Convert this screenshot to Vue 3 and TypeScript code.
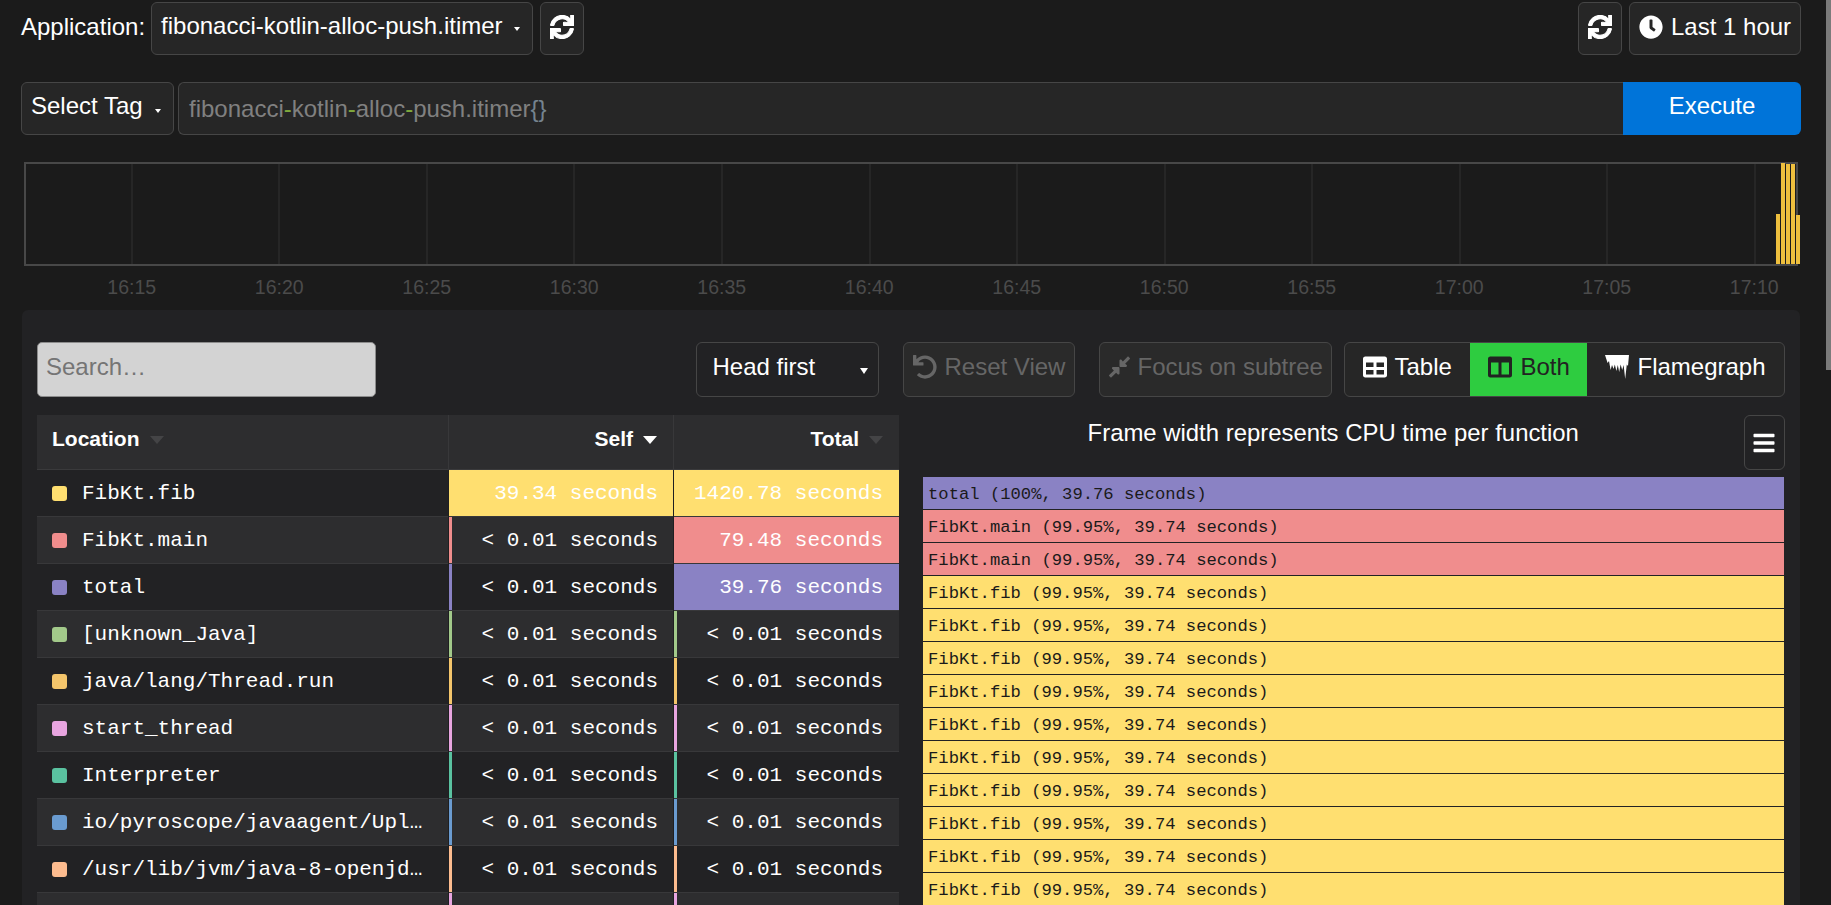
<script setup lang="ts">
interface Row { name: string; color: string; self: string; total: string; selfFull?: boolean; totalFull?: boolean }

const syncPath = 'M440.65 12.57l4 82.77A247.16 247.16 0 0 0 255.83 8C134.73 8 33.91 94.92 12.29 209.82A12 12 0 0 0 24.09 224h49.05a12 12 0 0 0 11.67-9.26 175.91 175.91 0 0 1 317-56.94l-101.46-4.86a12 12 0 0 0-12.57 12v47.41a12 12 0 0 0 12 12H500a12 12 0 0 0 12-12V12a12 12 0 0 0-12-12h-47.37a12 12 0 0 0-11.98 12.57zM255.83 432a175.61 175.61 0 0 1-146-77.8l101.8 4.87a12 12 0 0 0 12.57-12v-47.4a12 12 0 0 0-12-12H12a12 12 0 0 0-12 12V500a12 12 0 0 0 12 12h47.35a12 12 0 0 0 12-12.6l-4.15-82.57A247.17 247.17 0 0 0 255.83 504c121.11 0 221.93-86.92 243.55-201.82a12 12 0 0 0-11.8-14.18h-49.05a12 12 0 0 0-11.67 9.26A175.86 175.86 0 0 1 255.83 432z'

const ticks = ['16:15','16:20','16:25','16:30','16:35','16:40','16:45','16:50','16:55','17:00','17:05','17:10']

const bars = [
  { left: 1750, height: 50 },
  { left: 1755, height: 101 },
  { left: 1760, height: 100 },
  { left: 1765, height: 100 },
  { left: 1770, height: 49 },
]

const tiny = '< 0.01 seconds'
const rows: Row[] = [
  { name: 'FibKt.fib', color: '#ffdf70', self: '39.34 seconds', total: '1420.78 seconds', selfFull: true, totalFull: true },
  { name: 'FibKt.main', color: '#f08d8d', self: tiny, total: '79.48 seconds', totalFull: true },
  { name: 'total', color: '#8a82c4', self: tiny, total: '39.76 seconds', totalFull: true },
  { name: '[unknown_Java]', color: '#a2c98a', self: tiny, total: tiny },
  { name: 'java/lang/Thread.run', color: '#f4c56b', self: tiny, total: tiny },
  { name: 'start_thread', color: '#e8a5e0', self: tiny, total: tiny },
  { name: 'Interpreter', color: '#5ac2a0', self: tiny, total: tiny },
  { name: 'io/pyroscope/javaagent/Upl…', color: '#6a9bd0', self: tiny, total: tiny },
  { name: '/usr/lib/jvm/java-8-openjd…', color: '#fdbc8f', self: tiny, total: tiny },
  { name: '', color: '#e8a5e0', self: '', total: '' },
]

function cellBg(color: string, full?: boolean) {
  return { background: `linear-gradient(${color}, ${color}) left top / ${full ? '100%' : '3px'} 100% no-repeat` }
}

const frames = [
  { text: 'total (100%, 39.76 seconds)', color: '#8a82c4' },
  { text: 'FibKt.main (99.95%, 39.74 seconds)', color: '#f08d8d' },
  { text: 'FibKt.main (99.95%, 39.74 seconds)', color: '#f08d8d' },
  ...Array.from({ length: 10 }, () => ({ text: 'FibKt.fib (99.95%, 39.74 seconds)', color: '#ffdf70' })),
]
</script>

<template>
  <div class="page">
    <header class="bar">
      <span class="label">Application:</span>
      <div class="control app-select">fibonacci-kotlin-alloc-push.itimer<i class="caret small"></i></div>
      <button class="control icon-btn"><svg class="ico sync" viewBox="0 0 512 512"><path :d="syncPath" /></svg></button>
      <button class="control icon-btn push"><svg class="ico sync" viewBox="0 0 512 512"><path :d="syncPath" /></svg></button>
      <button class="control last">
        <svg class="ico" viewBox="0 0 512 512"><path d="M256,8C119,8,8,119,8,256S119,504,256,504,504,393,504,256,393,8,256,8Zm92.49,313h0l-20,25a16,16,0,0,1-22.49,2.5h0l-67-49.72a40,40,0,0,1-15-31.23V112a16,16,0,0,1,16-16h32a16,16,0,0,1,16,16V256l58,42.5A16,16,0,0,1,348.49,321Z" /></svg>
        Last 1 hour
      </button>
    </header>

    <section class="query">
      <div class="control tag"><span class="tag-text">Select Tag</span><i class="caret small"></i></div>
      <div class="query-input">fibonacci<b class="op">-</b>kotlin<b class="op">-</b>alloc<b class="op">-</b>push.itimer<span class="brace">{}</span></div>
      <button class="execute">Execute</button>
    </section>

    <section class="chart">
      <div class="grid"><span v-for="t in ticks" :key="t" class="gridcell"></span></div>
      <span v-for="b in bars" :key="b.left" class="tsbar" :style="{ left: b.left + 'px', height: b.height + 'px' }"></span>
    </section>
    <div class="ticks"><span v-for="t in ticks" :key="t">{{ t }}</span></div>

    <main class="panel">
      <div class="toolbar">
        <input class="search" placeholder="Search…" />
        <div class="control head-first">Head first<i class="caret"></i></div>
        <button class="control dim reset">
          <svg class="ico" viewBox="0 0 512 512"><path d="M212.333 224.333H12c-6.627 0-12-5.373-12-12V12C0 5.373 5.373 0 12 0h48c6.627 0 12 5.373 12 12v78.112C117.773 39.279 184.26 7.47 258.175 8.007c136.906.994 246.448 111.623 246.157 248.532C504.041 393.258 393.12 504 256.333 504c-64.089 0-122.496-24.313-166.51-64.215-5.099-4.622-5.334-12.554-.467-17.42l33.967-33.967c4.474-4.474 11.662-4.717 16.401-.525C170.76 415.336 211.58 432 256.333 432c97.268 0 176-78.716 176-176 0-97.267-78.716-176-176-176-58.496 0-110.28 28.476-142.274 72.333h98.274c6.627 0 12 5.373 12 12v48c0 6.627-5.373 12-12 12z" /></svg>
          Reset View
        </button>
        <button class="control dim focus">
          <svg class="ico" viewBox="0 0 448 512"><path d="M4.686 427.314L104 328l-32.922-31.029C55.958 281.851 66.666 256 88.048 256h112C213.303 256 224 266.745 224 280v112c0 21.382-25.803 32.09-40.922 16.971L152 376l-99.314 99.314c-6.248 6.248-16.379 6.248-22.627 0L4.686 449.941c-6.248-6.248-6.248-16.379 0-22.627zM443.314 84.686L344 184l32.922 31.029c15.12 15.12 4.412 40.971-16.97 40.971H248c-13.255 0-24-10.745-24-24V120c0-21.382 25.803-32.09 40.922-16.971L296 136l99.314-99.314c6.248-6.248 16.379-6.248 22.627 0l25.373 25.373c6.248 6.248 6.248 16.379 0 22.627z" /></svg>
          Focus on subtree
        </button>
        <div class="control segmented">
          <button class="seg seg-table">
            <svg class="ico" viewBox="0 0 512 512"><path d="M464 32H48C21.49 32 0 53.49 0 80v352c0 26.51 21.49 48 48 48h416c26.51 0 48-21.49 48-48V80c0-26.51-21.49-48-48-48zM224 416H64v-96h160v96zm0-160H64v-96h160v96zm224 160H288v-96h160v96zm0-160H288v-96h160v96z" /></svg>
            Table
          </button>
          <button class="seg seg-both">
            <svg class="ico" viewBox="0 0 512 512"><path d="M464 32H48C21.49 32 0 53.49 0 80v352c0 26.51 21.49 48 48 48h416c26.51 0 48-21.49 48-48V80c0-26.51-21.49-48-48-48zM224 416H64V160h160v256zm224 0H288V160h160v256z" /></svg>
            Both
          </button>
          <button class="seg seg-flame">
            <svg class="ico" viewBox="0 0 24 24"><path d="M0 0H24L23 11 21.8 9.5 20.2 24 18.6 10 17.2 15 15.6 9.5 14.2 17 12.8 10 11.4 16 9.8 9.5 8.6 14 7 10 5.6 15 4 6 2.6 8Z" /></svg>
            Flamegraph
          </button>
        </div>
      </div>

      <div class="content">
        <table class="table">
          <colgroup><col class="c1" /><col class="c2" /><col class="c3" /></colgroup>
          <thead>
            <tr>
              <th class="left">Location<i class="sort"></i></th>
              <th>Self<i class="sort on"></i></th>
              <th>Total<i class="sort"></i></th>
            </tr>
          </thead>
          <tbody>
            <tr v-for="(r, i) in rows" :key="i">
              <td class="name"><div class="name-wrap"><i class="swatch" :style="{ background: r.color }"></i><span class="name-text">{{ r.name }}</span></div></td>
              <td class="num" :style="cellBg(r.color, r.selfFull)">{{ r.self }}</td>
              <td class="num" :style="cellBg(r.color, r.totalFull)">{{ r.total }}</td>
            </tr>
          </tbody>
        </table>

        <div class="flame">
          <div class="flame-head">
            <h2 class="flame-title">Frame width represents CPU time per function</h2>
            <button class="control menu">
              <svg class="ico" viewBox="0 0 448 512"><path d="M16 132h416c8.837 0 16-7.163 16-16V76c0-8.837-7.163-16-16-16H16C7.163 60 0 67.163 0 76v40c0 8.837 7.163 16 16 16zm0 160h416c8.837 0 16-7.163 16-16v-40c0-8.837-7.163-16-16-16H16c-8.837 0-16 7.163-16 16v40c0 8.837 7.163 16 16 16zm0 160h416c8.837 0 16-7.163 16-16v-40c0-8.837-7.163-16-16-16H16c-8.837 0-16 7.163-16 16v40c0 8.837 7.163 16 16 16z" /></svg>
            </button>
          </div>
          <div class="frames">
            <div v-for="(f, i) in frames" :key="i" class="frame" :style="{ background: f.color }">{{ f.text }}</div>
          </div>
        </div>
      </div>
    </main>
    <div class="scrollthumb"></div>
  </div>
</template>

<style scoped>
.page {
  box-sizing: border-box;
  width: 1831px;
  height: 905px;
  overflow: hidden;
  padding: 2px 30px 0 21px;
  display: flex;
  flex-direction: column;
  background: #1b1b1b;
  color: #fff;
  font: 24px "Liberation Sans", Arial, sans-serif;
}
button, input { font: inherit; color: inherit; }
.bar { display: flex; align-items: stretch; height: 53px; flex: none; }
.label { align-self: center; margin-right: 6px; margin-top: -3px; }
.control {
  box-sizing: border-box;
  display: flex;
  align-items: center;
  background: #262626;
  border: 1px solid #464646;
  border-radius: 6px;
  color: #fff;
  padding: 0;
}
.app-select { width: 382px; padding: 0 0 6px 9px; }
.caret {
  display: block;
  width: 0; height: 0;
  border-left: 4.5px solid transparent;
  border-right: 4.5px solid transparent;
  border-top: 6px solid #fff;
  margin-left: auto;
}
.caret.small { border-left-width: 3.5px; border-right-width: 3.5px; border-top-width: 4px; }
.app-select .caret { margin: 6px 12px 0 auto; }
.icon-btn { width: 44px; justify-content: center; margin-left: 7px; padding-bottom: 4px; }
.ico { width: 24px; height: 24px; fill: currentColor; display: block; flex: none; }
.sync { stroke: currentColor; stroke-width: 22; }
.push { margin-left: auto; }
.last { width: 172px; margin-left: 7px; padding: 0 0 4px 9px; gap: 8px; }

.query { display: flex; height: 53px; margin-top: 27px; flex: none; }
.tag { width: 153px; padding-left: 9px; }
.tag-text { margin-top: -5px; }
.tag .caret { margin: 5px 12px 0 auto; }
.query-input {
  box-sizing: border-box;
  flex: 1;
  margin-left: 4px;
  background: #262626;
  border: 1px solid #464646;
  border-right: 0;
  border-radius: 6px 0 0 6px;
  color: #808080;
  padding: 0 0 0 10px;
  display: flex;
  align-items: center;
}
.op { font-weight: 400; color: #7fa83c; }
.brace { color: #75838f; }
.execute {
  width: 178px;
  border: 0;
  border-radius: 0 6px 6px 0;
  background: #0074d9;
  color: #fff;
  padding: 0 0 5px;
}

.chart {
  position: relative;
  box-sizing: border-box;
  height: 104px;
  margin: 27px 3px 0 3px;
  flex: none;
  border: 2px solid #484848;
}
.grid { display: flex; height: 100%; padding-left: 31px; }
.gridcell { flex: none; width: 147.55px; position: relative; }
.gridcell::before {
  content: "";
  position: absolute;
  left: 50%;
  top: 0;
  bottom: 0;
  width: 2px;
  background: #262626;
}
.tsbar {
  position: absolute;
  bottom: 0;
  width: 4px;
  background: #eebf3e;
}
.ticks {
  display: flex;
  flex: none;
  height: 22px;
  margin: 10px 0 0 37px;
  font-size: 19.5px;
  line-height: 22px;
  color: #4b4b4b;
}
.ticks span { flex: none; width: 147.5px; text-align: center; }

.panel {
  box-sizing: border-box;
  flex: 1;
  min-height: 0;
  margin: 12px 1px 0 1px;
  padding: 32px 15.5px 0 15px;
  background: #222224;
  border-radius: 6px 6px 0 0;
}
.toolbar { display: flex; height: 55px; }
.search {
  box-sizing: border-box;
  width: 338.5px;
  background: #d3d3d3;
  border: 1px solid #8c8c8c;
  border-radius: 5px;
  padding: 0 8px 6px;
  outline: none;
}
.search::placeholder { color: #757575; opacity: 1; }
.head-first { width: 183px; margin-left: 320px; padding: 0 10px 6px 16px; background: transparent; }
.head-first .caret { margin-top: 8px; }
.dim { color: #666; background: #2a2a2a; gap: 8px; padding: 0 0 6px 9px; }
.reset { width: 172px; margin-left: 24px; }
.focus { width: 233px; margin-left: 24px; }
.focus .ico { width: 21px; height: 24px; }
.segmented { width: 441px; margin-left: 12px; overflow: hidden; align-items: stretch; background: #262626; }
.seg {
  display: flex;
  align-items: center;
  gap: 8px;
  border: 0;
  background: transparent;
  color: #fff;
  padding: 0 0 6px 18px;
}
.seg-table { width: 125px; }
.seg-both { width: 117px; background: #2ecc40; color: #222; gap: 9px; }
.seg-flame { flex: 1; gap: 9px; }

.content { display: flex; gap: 24px; margin-top: 18px; }
.table {
  width: 862px;
  flex: none;
  border-collapse: collapse;
  table-layout: fixed;
  align-self: flex-start;
}
.c1 { width: 411.5px; }
.c2 { width: 225px; }
.c3 { width: 225.5px; }
thead tr { height: 54px; background: #2d2d2f; border-bottom: 1px solid #3a3a3c; }
th {
  font-size: 21px;
  font-weight: 700;
  text-align: right;
  padding: 0 16px 6px 0;
  border-left: 1px solid #38383a;
}
th.left { text-align: left; padding-left: 15px; border-left: 0; }
.sort {
  display: inline-block;
  width: 0; height: 0;
  margin-left: 10px;
  vertical-align: 2px;
  border-left: 7px solid transparent;
  border-right: 7px solid transparent;
  border-top: 8px solid #444446;
}
.sort.on { border-top-color: #fff; }
tbody tr { height: 47px; border-bottom: 1px solid #38383a; }
tbody tr:nth-child(even) { background: #2d2d2f; }
td { padding: 2px 0 0; font: 21px "Liberation Mono", monospace; }
.name-wrap { display: flex; align-items: center; padding: 0 20px 0 15px; gap: 15px; }
.swatch { flex: none; width: 15px; height: 15px; border-radius: 3px; }
.name-text { min-width: 0; white-space: nowrap; }
.num { text-align: right; padding-right: 16px; border-left: 1px solid #1f1f21; }
.num:nth-child(2) { padding-right: 15px; }

.flame { flex: 1; min-width: 0; }
.flame-head { display: flex; height: 55px; }
.flame-title { flex: 1; margin: 0; font-size: 23.9px; font-weight: 400; text-align: center; line-height: 36px; padding-bottom: 19px; }
.menu { width: 41px; justify-content: center; background: transparent; padding: 0; }
.frames { margin: 7px .5px 0 0; display: flex; flex-direction: column; gap: 1px; }
.frame {
  box-sizing: border-box;
  height: 32px;
  padding: 2px 0 0 5px;
  color: #1a1a1a;
  font: 17.2px/32px "Liberation Mono", monospace;
  white-space: nowrap;
}
.scrollthumb { position: fixed; top: 0; right: 0; width: 5px; height: 370px; background: #7b7b7b; }
</style>

<style>
html, body { margin: 0; background: #1b1b1b; overflow: hidden; }
</style>
